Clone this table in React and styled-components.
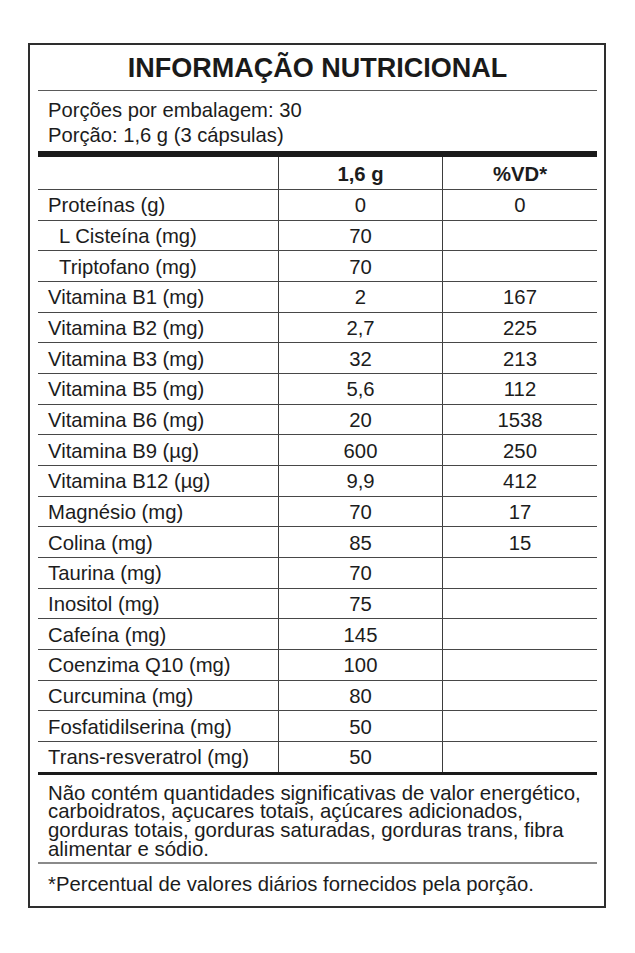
import React from "react";
import styled, { createGlobalStyle } from "styled-components";

const Global = createGlobalStyle`
  html, body { margin: 0; padding: 0; background: #ffffff; }
  body { font-family: "Liberation Sans", Arial, Helvetica, sans-serif; color: #1c1c1c; }
`;

const Page = styled.div`
  padding: 43px 0 0 28px;
`;

const Label = styled.div`
  box-sizing: border-box;
  width: 578px;
  height: 865px;
  border: 2px solid #2e2e2e;
  padding: 0 7px 0 8px;
  display: flex;
  flex-direction: column;
`;

const Title = styled.h1`
  margin: 0;
  height: 46px;
  box-sizing: border-box;
  padding-top: 1px;
  line-height: 45px;
  text-align: center;
  font-size: 27px;
  font-weight: 700;
  color: #1a1a1a;
  border-bottom: 1px solid #5a5a5a;
  flex: none;
`;

const Serving = styled.div`
  height: 60px;
  box-sizing: border-box;
  padding: 7px 0 0 10px;
  font-size: 20.2px;
  line-height: 25px;
  flex: none;
`;

const ThickBar = styled.div`
  height: ${(p) => p.$h}px;
  background: #1a1a1a;
  flex: none;
`;

const Row = styled.div`
  display: grid;
  grid-template-columns: 240px 164px 1fr;
  box-sizing: border-box;
  height: ${(p) => p.$h}px;
  border-bottom: ${(p) => (p.$last ? "none" : "1px solid #474747")};
  flex: none;
`;

const Cell = styled.div`
  display: flex;
  align-items: center;
  justify-content: ${(p) => (p.$first ? "flex-start" : "center")};
  padding-left: ${(p) => (p.$first ? (p.$indent ? "21px" : "10px") : "0")};
  padding-top: 2px;
  border-left: ${(p) => (p.$first ? "none" : "1px solid #3d3d3d")};
  font-size: 20.3px;
  font-weight: ${(p) => (p.$bold ? 700 : 400)};
  white-space: nowrap;
`;

const Note = styled.div`
  box-sizing: border-box;
  height: 89px;
  padding: 9px 0 0 10px;
  font-size: 20.4px;
  line-height: 18.7px;
  white-space: nowrap;
  border-bottom: 2px solid #8a8a8a;
  flex: none;
`;

const Footer = styled.div`
  padding: 8px 0 0 10px;
  font-size: 20.3px;
  line-height: 25px;
  white-space: nowrap;
`;

const rows = [
  ["Proteínas (g)", "0", "0"],
  ["L Cisteína (mg)", "70", "", true],
  ["Triptofano (mg)", "70", "", true],
  ["Vitamina B1 (mg)", "2", "167"],
  ["Vitamina B2 (mg)", "2,7", "225"],
  ["Vitamina B3 (mg)", "32", "213"],
  ["Vitamina B5 (mg)", "5,6", "112"],
  ["Vitamina B6 (mg)", "20", "1538"],
  ["Vitamina B9 (µg)", "600", "250"],
  ["Vitamina B12 (µg)", "9,9", "412"],
  ["Magnésio (mg)", "70", "17"],
  ["Colina (mg)", "85", "15"],
  ["Taurina (mg)", "70", ""],
  ["Inositol (mg)", "75", ""],
  ["Cafeína (mg)", "145", ""],
  ["Coenzima Q10 (mg)", "100", ""],
  ["Curcumina (mg)", "80", ""],
  ["Fosfatidilserina (mg)", "50", ""],
  ["Trans-resveratrol (mg)", "50", ""],
];

export default function App() {
  return (
    <Page>
      <Global />
      <Label>
        <Title>INFORMAÇÃO NUTRICIONAL</Title>
        <Serving>
          Porções por embalagem: 30
          <br />
          Porção: 1,6 g (3 cápsulas)
        </Serving>
        <ThickBar $h={6} />
        <Row $h={33}>
          <Cell $first />
          <Cell $bold>1,6 g</Cell>
          <Cell $bold>%VD*</Cell>
        </Row>
        {rows.map(([name, qty, vd, indent], i) => (
          <Row key={name} $h={i === rows.length - 1 ? 29.68 : 30.68} $last={i === rows.length - 1}>
            <Cell $first $indent={indent}>{name}</Cell>
            <Cell>{qty}</Cell>
            <Cell>{vd}</Cell>
          </Row>
        ))}
        <ThickBar $h={3} />
        <Note>
          Não contém quantidades significativas de valor energético,
          <br />
          carboidratos, açucares totais, açúcares adicionados,
          <br />
          gorduras totais, gorduras saturadas, gorduras trans, fibra
          <br />
          alimentar e sódio.
        </Note>
        <Footer>*Percentual de valores diários fornecidos pela porção.</Footer>
      </Label>
    </Page>
  );
}
